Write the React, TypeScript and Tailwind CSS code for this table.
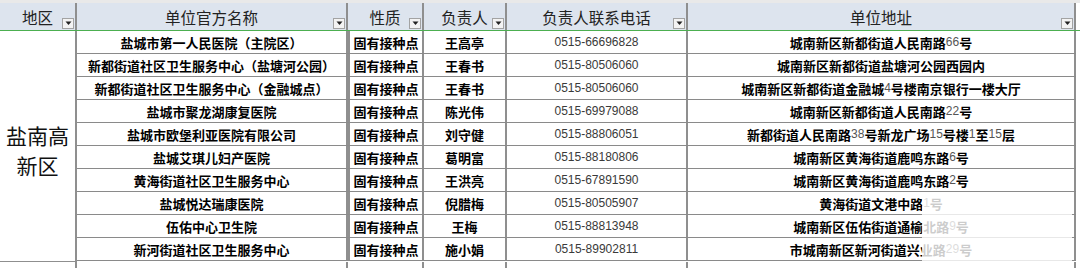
import React from "react";

type Row = { name: string; kind: string; person: string; phone: string; addr: string };

const rows: Row[] = [
  { name: "盐城市第一人民医院（主院区）", kind: "固有接种点", person: "王高亭", phone: "0515-66696828", addr: "城南新区新都街道人民南路66号" },
  { name: "新都街道社区卫生服务中心（盐塘河公园）", kind: "固有接种点", person: "王春书", phone: "0515-80506060", addr: "城南新区新都街道盐塘河公园西园内" },
  { name: "新都街道社区卫生服务中心（金融城点）", kind: "固有接种点", person: "王春书", phone: "0515-80506060", addr: "城南新区新都街道金融城4号楼南京银行一楼大厅" },
  { name: "盐城市聚龙湖康复医院", kind: "固有接种点", person: "陈光伟", phone: "0515-69979088", addr: "城南新区新都街道人民南路22号" },
  { name: "盐城市欧堡利亚医院有限公司", kind: "固有接种点", person: "刘守健", phone: "0515-88806051", addr: "新都街道人民南路38号新龙广场15号楼1至15层" },
  { name: "盐城艾琪儿妇产医院", kind: "固有接种点", person: "葛明富", phone: "0515-88180806", addr: "城南新区黄海街道鹿鸣东路6号" },
  { name: "黄海街道社区卫生服务中心", kind: "固有接种点", person: "王洪亮", phone: "0515-67891590", addr: "城南新区黄海街道鹿鸣东路2号" },
  { name: "盐城悦达瑞康医院", kind: "固有接种点", person: "倪腊梅", phone: "0515-80505907", addr: "黄海街道文港中路1号" },
  { name: "伍佑中心卫生院", kind: "固有接种点", person: "王梅", phone: "0515-88813948", addr: "城南新区伍佑街道通榆北路9号" },
  { name: "新河街道社区卫生服务中心", kind: "固有接种点", person: "施小娟", phone: "0515-89902811", addr: "市城南新区新河街道兴业路29号" },
];

const FilterBtn = () => (
  <span className="absolute right-[1px] bottom-[1px] flex h-[11px] w-[12px] items-center justify-center border border-[#a3a3a3] bg-[#f3f3f3]">
    <svg width="7" height="5" viewBox="0 0 7 5">
      <path d="M0.5 0.5h6L3.5 4z" fill="#222" />
    </svg>
  </span>
);

const Addr = ({ text }: { text: string }) => (
  <>
    {text.split(/(\d+)/).map((part, i) =>
      /^\d+$/.test(part) ? (
        <span key={i} className="font-['Liberation_Sans',sans-serif] text-[12px] font-normal text-[#555]">
          {part}
        </span>
      ) : (
        <span key={i}>{part}</span>
      )
    )}
  </>
);

const HeadCell = ({ w, label }: { w: string; label: string }) => (
  <div className={`relative flex items-center justify-center border-r-2 border-[#8f8f8f] pt-[2px] ${w}`}>
    {label}
    <FilterBtn />
  </div>
);

export default function App() {
  return (
    <div className="relative h-[268px] w-[1080px] overflow-hidden bg-white font-['Noto_Sans_CJK_SC',sans-serif] text-black">
      <div className="h-[3px] bg-[#e9e9e9]" />
      {/* header */}
      <div className="flex h-[27px] bg-[#dde4ee] text-[15.5px] text-[#222]">
        <HeadCell w="w-[77px]" label="地区" />
        <HeadCell w="w-[271px]" label="单位官方名称" />
        <HeadCell w="w-[76px]" label="性质" />
        <HeadCell w="w-[83px]" label="负责人" />
        <HeadCell w="w-[181px]" label="负责人联系电话" />
        <HeadCell w="w-[388px]" label="单位地址" />
        <div className="flex-1 bg-white" />
      </div>
      <div className="h-px bg-[#4caf50]" />
      {/* body */}
      <div className="flex">
        <div className="flex h-[231px] w-[77px] items-center justify-center border-r-2 border-b border-[#8f8f8f] pt-[8px] text-center text-[21px] leading-[30px] text-[#111]">
          盐南高
          <br />
          新区
        </div>
        <div className="flex flex-col">
          {rows.map((r, i) => (
            <div key={i} className="flex h-[23px] border-b border-[#8a8a8a] text-[13px] font-bold leading-none">
              <div className="flex w-[271px] items-center justify-center border-r-2 border-[#8f8f8f] whitespace-nowrap">{r.name}</div>
              <div className="flex w-[76px] items-center justify-center border-r-2 border-l-2 border-[#8f8f8f] whitespace-nowrap">{r.kind}</div>
              <div className="flex w-[83px] items-center justify-center border-r-2 border-[#8f8f8f]">{r.person}</div>
              <div className="flex w-[181px] items-center justify-center border-r-2 border-[#8f8f8f] font-['Liberation_Sans',sans-serif] text-[12px] font-normal text-[#3a3a3a]">
                {r.phone}
              </div>
              <div className="flex w-[388px] items-center justify-center border-r-2 border-[#8f8f8f] whitespace-nowrap">
                <Addr text={r.addr} />
              </div>
            </div>
          ))}
        </div>
      </div>
      {/* partial next row */}
      <div className="flex h-[8px]">
        <div className="w-[77px] border-r-2 border-[#8f8f8f]" />
        <div className="w-[271px] border-r-2 border-[#8f8f8f]" />
        <div className="w-[76px] border-r-2 border-[#8f8f8f]" />
        <div className="w-[83px] border-r-2 border-[#8f8f8f]" />
        <div className="w-[181px] border-r-2 border-[#8f8f8f]" />
        <div className="w-[388px] border-r-2 border-[#8f8f8f]" />
      </div>
      {/* watermark over the lower right */}
      <div className="absolute left-[922px] top-[194px] h-[68px] w-[150px] bg-white/80" />
    </div>
  );
}
